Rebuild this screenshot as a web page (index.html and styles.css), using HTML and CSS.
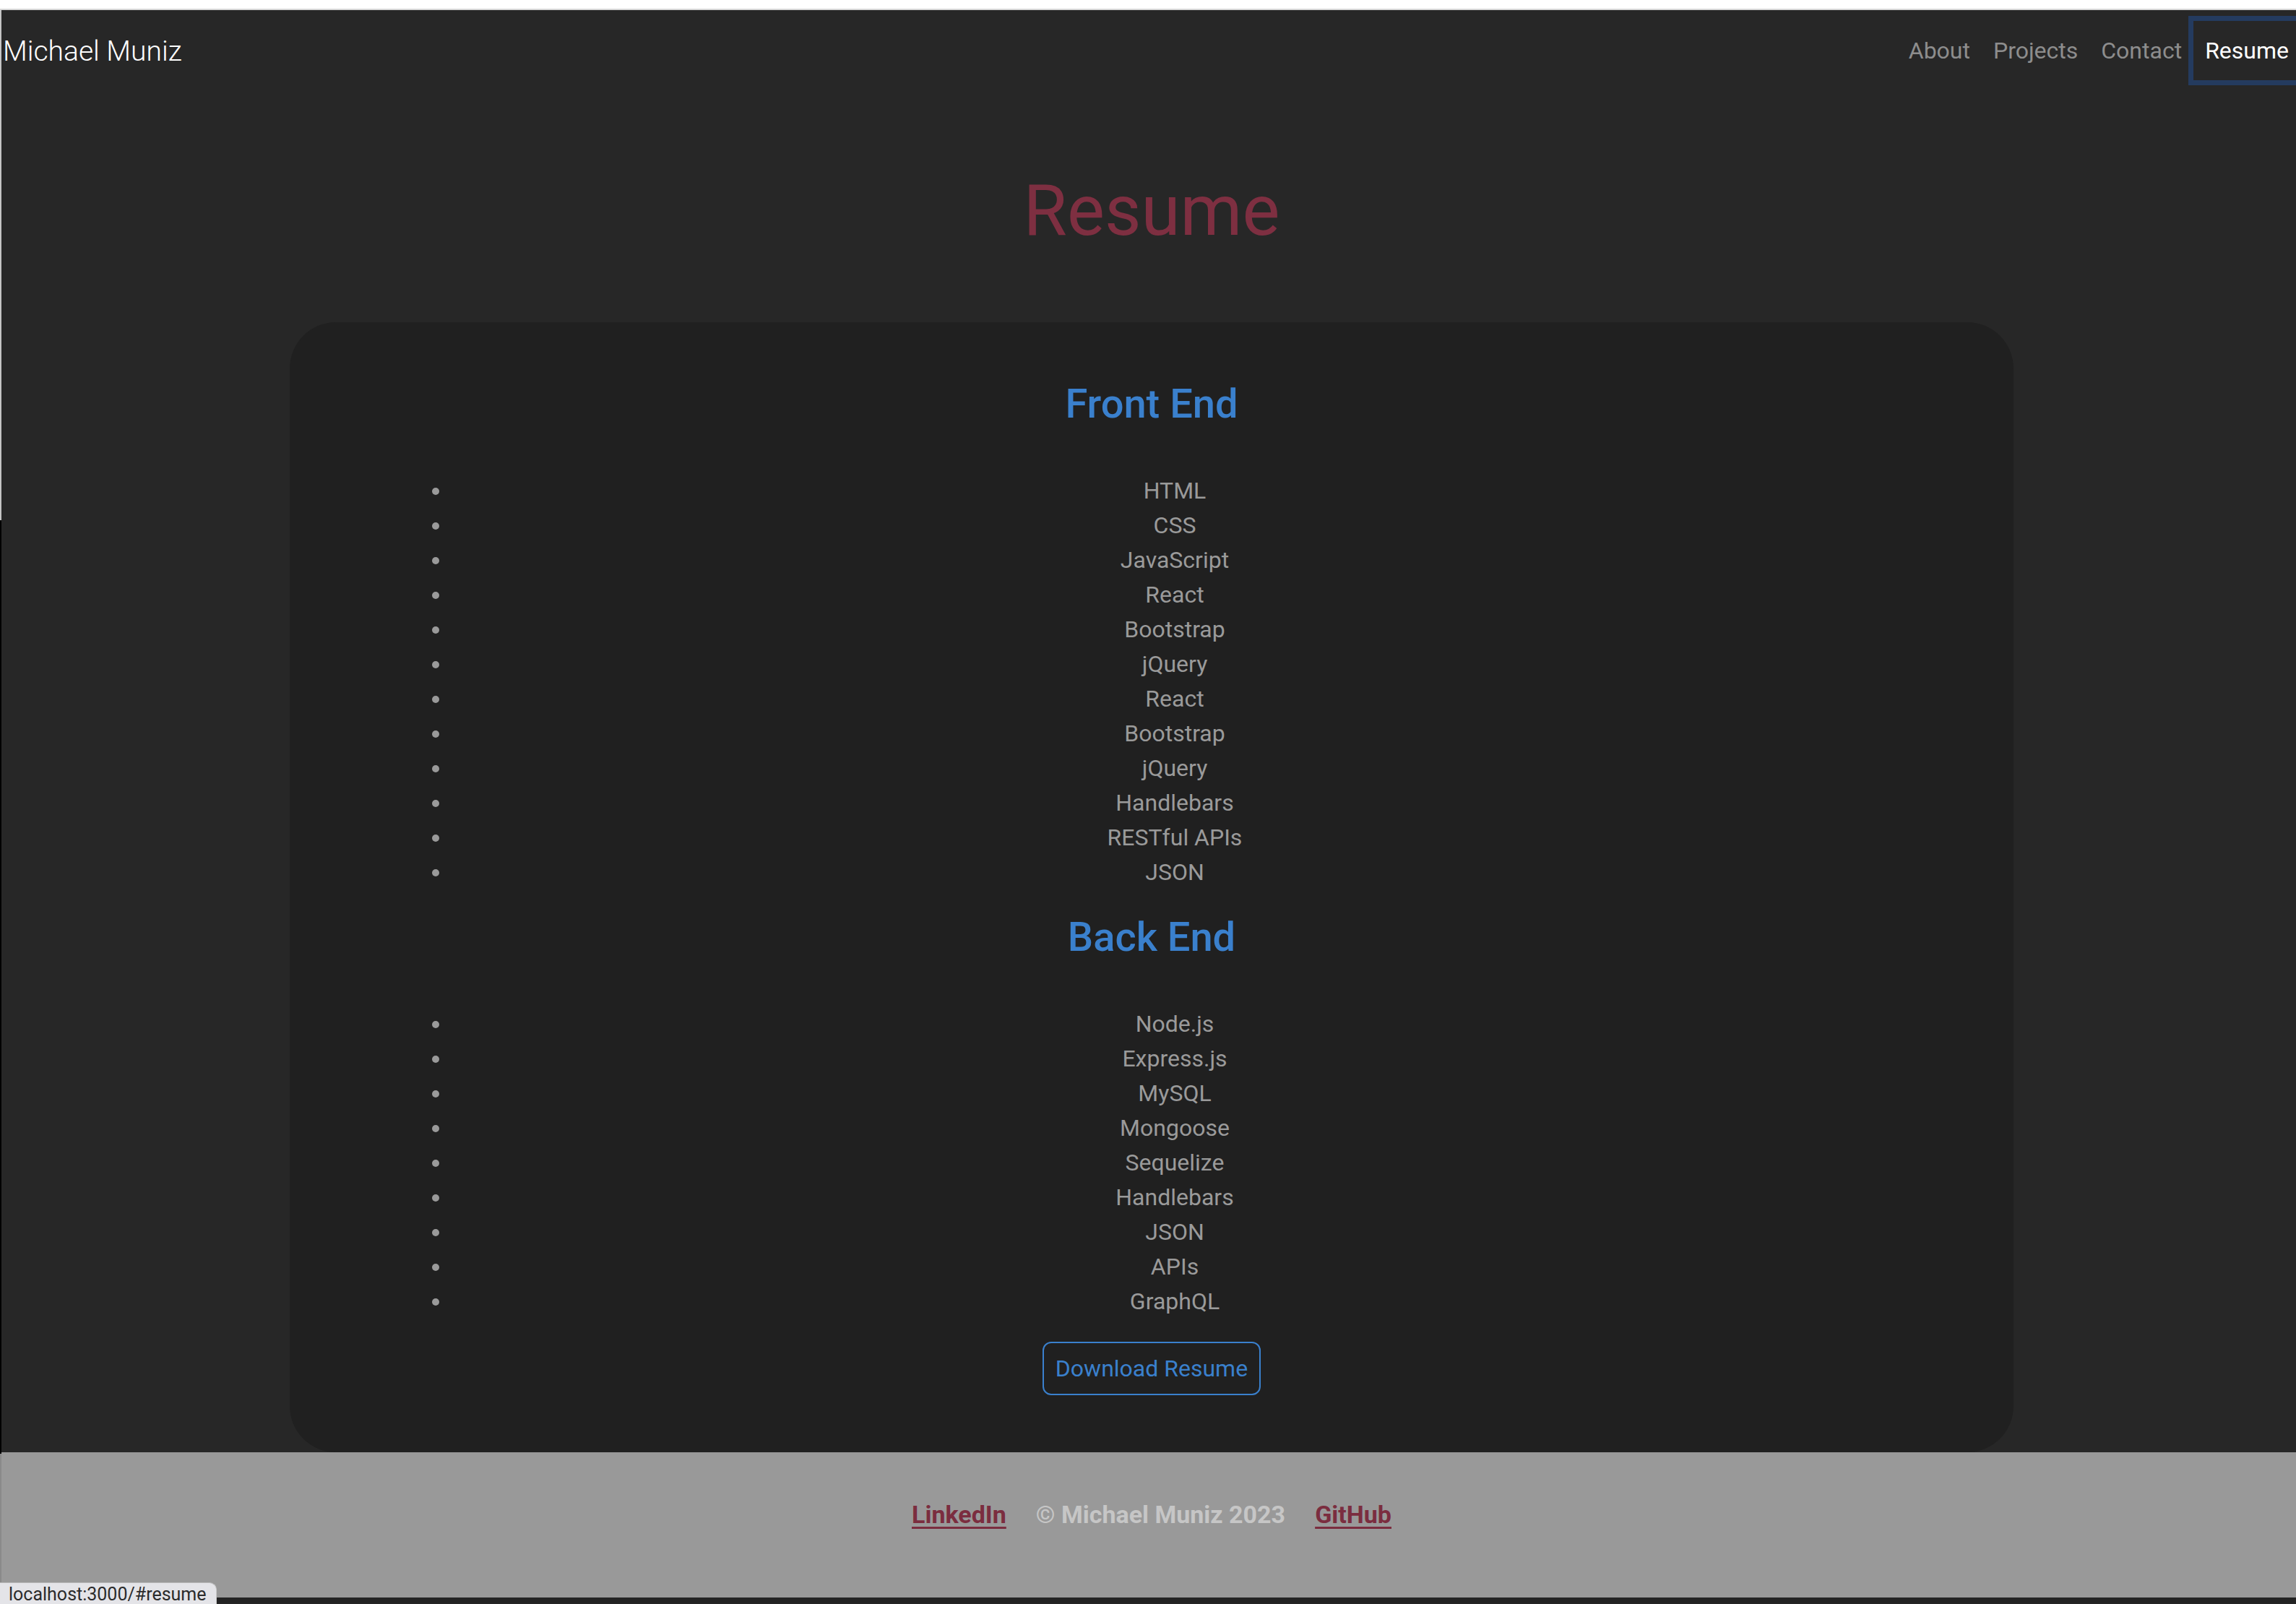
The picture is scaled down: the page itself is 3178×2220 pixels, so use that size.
FILE: index.html
```html
<!DOCTYPE html>
<html lang="en">
<head>
<meta charset="utf-8">
<title>Michael Muniz - Resume</title>
<link rel="stylesheet" href="styles.css">
</head>
<body>
<div class="chrome-top"></div>
<div class="frame">
  <div class="edge"></div>
  <div class="site">
    <nav class="navbar">
      <a class="brand" href="#">Michael Muniz</a>
      <ul class="nav-links">
        <li><a class="nav-link" href="#about">About</a></li>
        <li><a class="nav-link" href="#projects">Projects</a></li>
        <li><a class="nav-link" href="#contact">Contact</a></li>
        <li><a class="nav-link active" href="#resume">Resume</a></li>
      </ul>
    </nav>
    <main class="main">
      <h1 class="page-title">Resume</h1>
      <section class="card">
        <h2 class="section-title">Front End</h2>
        <ul class="skills">
          <li>HTML</li>
          <li>CSS</li>
          <li>JavaScript</li>
          <li>React</li>
          <li>Bootstrap</li>
          <li>jQuery</li>
          <li>React</li>
          <li>Bootstrap</li>
          <li>jQuery</li>
          <li>Handlebars</li>
          <li>RESTful APIs</li>
          <li>JSON</li>
        </ul>
        <h2 class="section-title">Back End</h2>
        <ul class="skills">
          <li>Node.js</li>
          <li>Express.js</li>
          <li>MySQL</li>
          <li>Mongoose</li>
          <li>Sequelize</li>
          <li>Handlebars</li>
          <li>JSON</li>
          <li>APIs</li>
          <li>GraphQL</li>
        </ul>
        <div class="actions">
          <a class="btn-outline" href="#">Download Resume</a>
        </div>
      </section>
    </main>
    <footer class="footer">
      <a class="footer-link" href="#">LinkedIn</a>
      <span class="copyright">© Michael Muniz 2023</span>
      <a class="footer-link" href="#">GitHub</a>
    </footer>
    <div class="chrome-bottom"></div>
  </div>
</div>
<div class="status-bubble">localhost:3000/#resume</div>
</body>
</html>
```

FILE: styles.css
```css
html, body {
  margin: 0;
  padding: 0;
  overflow: hidden;
  background: #272727;
}

body {
  font-family: Roboto, "Liberation Sans", Arial, sans-serif;
  width: 3178px;
  height: 2220px;
  position: relative;
}

.chrome-top {
  height: 12px;
  background: #ffffff;
  border-bottom: 2px solid #d6d6d6;
}

.frame {
  display: flex;
  width: 3186px;
}

.edge {
  flex: 0 0 2px;
  background: linear-gradient(to bottom, #c4c4c4 0, #c4c4c4 706px, #000 706px, #000 1998px, #8a8a8a 1998px);
}

.site {
  flex: 0 0 3184px;
  display: flex;
  flex-direction: column;
}

/* navbar */
.navbar {
  display: flex;
  align-items: center;
  justify-content: space-between;
  height: 112px;
  padding: 2px 2px 0 2px;
  box-sizing: border-box;
}

.brand {
  font-size: 39px;
  font-weight: 300;
  color: #ffffff;
  text-decoration: none;
  line-height: 1;
}

.nav-links {
  display: flex;
  list-style: none;
  margin: 0 0 2px;
  padding: 0;
}

.nav-link {
  display: block;
  padding: 17px 16px;
  font-size: 32px;
  line-height: 48px;
  color: #8d8d8d;
  text-decoration: none;
}

.nav-link.active {
  color: #ffffff;
  outline: 7px solid #243b5f;
}

/* main */
.main {
  display: flex;
  flex-direction: column;
  align-items: center;
}

.page-title {
  margin: 103px 0 92px;
  font-size: 98px;
  line-height: 125px;
  font-weight: 400;
  color: #7e2f41;
}

.card {
  width: 2386px;
  box-sizing: border-box;
  padding: 77px 160px 79px;
  background: #202020;
  border-radius: 64px;
  text-align: center;
}

.section-title {
  margin: 0 0 60px;
  font-size: 56px;
  line-height: 72px;
  font-weight: 500;
  color: #3a80cd;
}

.skills {
  margin: 0 0 30px;
  padding-left: 64px;
  list-style: disc;
  color: #9a9a9a;
}

.skills li {
  font-size: 32px;
  line-height: 48px;
  text-align: center;
}

.actions {
  display: flex;
  justify-content: center;
  padding-top: 2px;
}

.btn-outline {
  display: block;
  padding: 11px 16px;
  font-size: 32px;
  line-height: 48px;
  color: #3a80cd;
  border: 2px solid #3a80cd;
  border-radius: 12px;
  text-decoration: none;
}

/* footer */
.footer {
  height: 201px;
  box-sizing: border-box;
  padding-top: 61px;
  background: #999999;
  display: flex;
  justify-content: center;
  align-items: flex-start;
  gap: 41px;
  font-size: 34px;
  line-height: 51px;
  font-weight: 700;
}

.footer-link {
  color: #7b2d3f;
  text-decoration: underline;
  text-underline-offset: 5px;
  text-decoration-thickness: 3px;
}

.copyright {
  color: #c6c6c6;
}

.chrome-bottom {
  height: 8px;
  background: #232323;
}

.status-bubble {
  position: absolute;
  left: 0;
  bottom: 0;
  width: 300px;
  height: 30px;
  box-sizing: border-box;
  padding: 3px 0 0 12px;
  background: #e4e4e8;
  border-top: 1px solid #b8b8b8;
  border-right: 1px solid #c8c8c8;
  border-top-right-radius: 10px;
  font-family: Roboto, "Liberation Sans", Arial, sans-serif;
  font-size: 25px;
  line-height: 1;
  color: #2b2b2b;
  white-space: nowrap;
}
```
